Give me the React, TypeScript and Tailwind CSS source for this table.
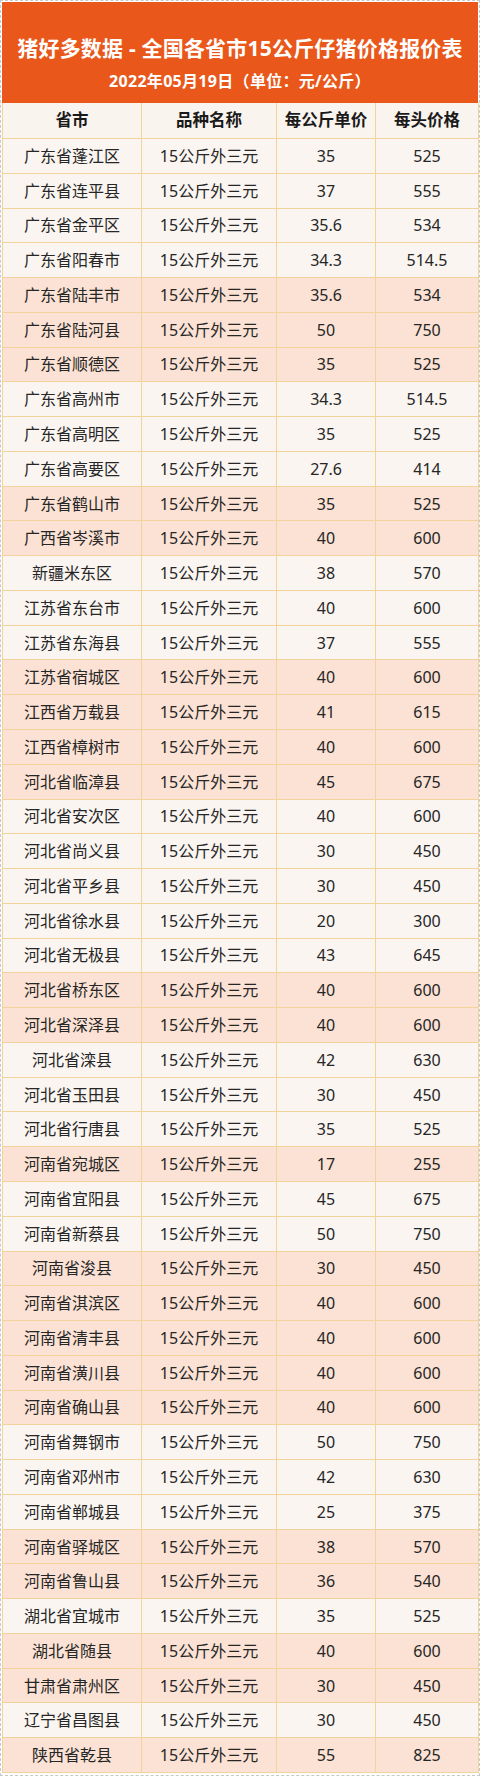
import React from "react";

type Row = [string, string, string, boolean];

const rows: Row[] = [
  ["广东省蓬江区", "35", "525", false],
  ["广东省连平县", "37", "555", false],
  ["广东省金平区", "35.6", "534", false],
  ["广东省阳春市", "34.3", "514.5", false],
  ["广东省陆丰市", "35.6", "534", true],
  ["广东省陆河县", "50", "750", true],
  ["广东省顺德区", "35", "525", true],
  ["广东省高州市", "34.3", "514.5", false],
  ["广东省高明区", "35", "525", false],
  ["广东省高要区", "27.6", "414", false],
  ["广东省鹤山市", "35", "525", true],
  ["广西省岑溪市", "40", "600", true],
  ["新疆米东区", "38", "570", false],
  ["江苏省东台市", "40", "600", false],
  ["江苏省东海县", "37", "555", false],
  ["江苏省宿城区", "40", "600", true],
  ["江西省万载县", "41", "615", true],
  ["江西省樟树市", "40", "600", true],
  ["河北省临漳县", "45", "675", true],
  ["河北省安次区", "40", "600", false],
  ["河北省尚义县", "30", "450", false],
  ["河北省平乡县", "30", "450", false],
  ["河北省徐水县", "20", "300", false],
  ["河北省无极县", "43", "645", false],
  ["河北省桥东区", "40", "600", true],
  ["河北省深泽县", "40", "600", true],
  ["河北省滦县", "42", "630", false],
  ["河北省玉田县", "30", "450", false],
  ["河北省行唐县", "35", "525", false],
  ["河南省宛城区", "17", "255", true],
  ["河南省宜阳县", "45", "675", false],
  ["河南省新蔡县", "50", "750", false],
  ["河南省浚县", "30", "450", true],
  ["河南省淇滨区", "40", "600", true],
  ["河南省清丰县", "40", "600", true],
  ["河南省潢川县", "40", "600", true],
  ["河南省确山县", "40", "600", true],
  ["河南省舞钢市", "50", "750", false],
  ["河南省邓州市", "42", "630", false],
  ["河南省郸城县", "25", "375", false],
  ["河南省驿城区", "38", "570", true],
  ["河南省鲁山县", "36", "540", true],
  ["湖北省宜城市", "35", "525", false],
  ["湖北省随县", "40", "600", true],
  ["甘肃省肃州区", "30", "450", true],
  ["辽宁省昌图县", "30", "450", false],
  ["陕西省乾县", "55", "825", true],
];

const font = {
  fontFamily: '"Noto Sans", "Noto Sans CJK SC", sans-serif',
};

export default function App() {
  return (
    <div
      className="w-[480px] h-[1776px] border border-dashed border-[#c8c8c8] p-px bg-white"
      style={font}
    >
      <div className="h-[101px] bg-[#e9571b] flex flex-col items-center text-white font-bold">
        <div className="mt-[31px] text-[21px] leading-[30px] tracking-[0.2px]">
          猪好多数据 - 全国各省市15公斤仔猪价格报价表
        </div>
        <div className="mt-[7px] text-[16px] leading-[22px] tracking-[0.3px]">
          2022年05月19日（单位：元/公斤）
        </div>
      </div>
      <div className="grid grid-cols-[139px_135px_99px_103px] border-l border-[#f3d39c]">
        {["省市", "品种名称", "每公斤单价", "每头价格"].map((h) => (
          <div
            key={h}
            className="h-[36px] flex items-center justify-center bg-[#faf4ef] border-r border-b border-[#f3d39c] text-[16.5px] font-bold text-[#1a1a1a]"
          >
            {h}
          </div>
        ))}
        {rows.map(([name, unit, price, pink], i) => {
          const bg = pink ? "bg-[#fbe2d4]" : "bg-[#faf5f1]";
          const cell =
            "h-[34.77px] flex items-center justify-center border-r border-b border-[#f3d39c] text-[16px] text-[#262626] " +
            bg;
          return (
            <React.Fragment key={i}>
              <div className={cell}>{name}</div>
              <div className={cell}>15公斤外三元</div>
              <div className={cell}>{unit}</div>
              <div className={cell}>{price}</div>
            </React.Fragment>
          );
        })}
      </div>
    </div>
  );
}
